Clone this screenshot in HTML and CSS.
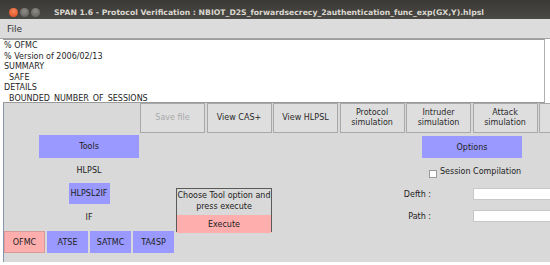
FILE: index.html
```html
<!DOCTYPE html>
<html lang="en">
<head>
  <meta charset="UTF-8">
  <meta name="viewport" content="width=device-width, initial-scale=1.0">
  <title>SPAN 1.6 - Protocol Verification</title>
  <link rel="stylesheet" href="styles.css">
</head>
<body>
  <div class="titlebar">
    <span class="dot close"></span>
    <span class="dot"></span>
    <span class="dot"></span>
    <span class="title">SPAN 1.6 - Protocol Verification : NBIOT_D2S_forwardsecrecy_2authentication_func_exp(GX,Y).hlpsl</span>
  </div>
  <div class="menubar"><span>File</span></div>

  <div class="content">
    <pre class="output">% OFMC
% Version of 2006/02/13
SUMMARY
  SAFE
DETAILS
  BOUNDED_NUMBER_OF_SESSIONS</pre>

    <div class="panel">
      <div class="actions">
        <button class="btn disabled">Save file</button>
        <button class="btn">View CAS+</button>
        <button class="btn">View HLPSL</button>
        <button class="btn">Protocol<br>simulation</button>
        <button class="btn">Intruder<br>simulation</button>
        <button class="btn">Attack<br>simulation</button>
        <button class="btn"></button>
      </div>

      <div class="workspace">
        <div class="tools-col">
          <button class="blue tools-btn">Tools</button>
          <div class="step">HLPSL</div>
          <button class="blue small-btn">HLPSL2IF</button>
          <div class="step step-if">IF</div>
          <div class="backends">
            <button class="pink small-btn">OFMC</button>
            <button class="blue small-btn">ATSE</button>
            <button class="blue small-btn">SATMC</button>
            <button class="blue small-btn">TA4SP</button>
          </div>
        </div>

        <div class="execute-box">
          <p>Choose Tool option and<br>press execute</p>
          <button class="pink execute-btn">Execute</button>
        </div>

        <div class="options-col">
          <button class="blue options-btn">Options</button>
          <label class="session"><span class="check"></span>Session Compilation</label>
          <div class="fields">
            <label for="depth">Defth :</label>
            <input type="text" id="depth">
            <label for="path">Path :</label>
            <input type="text" id="path">
          </div>
        </div>
      </div>
    </div>
  </div>
</body>
</html>
```

FILE: styles.css
```css
body {
  margin: 0;
  width: 550px;
  height: 265px;
  overflow: hidden;
  background: #ffffff;
  font-family: "DejaVu Sans", sans-serif;
  font-size: 8px;
  color: #222;
}
button {
  font-family: "DejaVu Sans", sans-serif;
  font-size: 8px;
  color: #222;
  padding: 0;
  cursor: pointer;
}
.titlebar {
  height: 19px;
  padding-top: 5px;
  box-sizing: border-box;
  display: flex;
  align-items: center;
  background: linear-gradient(#3a3935, #4a4945);
}
.dot {
  width: 9px;
  height: 9px;
  border-radius: 50%;
  margin-left: 2px;
  background: radial-gradient(circle at 50% 35%, #8d8c87, #5c5b57);
}
.dot.close {
  margin-left: 9px;
  background: radial-gradient(circle at 50% 35%, #f7875a, #d9481d);
}
.title {
  margin-left: 14px;
  color: #dcd8cf;
  font-weight: bold;
  font-size: 7.7px;
  white-space: nowrap;
}
.menubar {
  height: 19px;
  display: flex;
  align-items: center;
  padding-left: 7px;
  background: #dcdcdc;
  border-bottom: 1px solid #a4a4a4;
  font-size: 9px;
  color: #333;
}
.content {
  margin-left: 3px;
}
.output {
  margin: 0;
  width: 540px;
  height: 61px;
  padding-top: 1px;
  overflow: hidden;
  background: #ffffff;
  border-top: 1px solid #9a9a9a;
  border-bottom: 1px solid #9a9a9a;
  border-right: 1px solid #b0b0b0;
  padding-left: 1px;
  font-family: "DejaVu Sans", sans-serif;
  font-size: 8px;
  line-height: 10.6px;
  color: #1e1e1e;
}
.panel {
  height: 159px;
  background: #d9d9d9;
  border-left: 1px solid #8797b0;
  overflow: hidden;
}
.actions {
  display: flex;
  gap: 1.5px;
  padding-left: 136px;
  height: 30px;
}
.btn {
  flex: none;
  width: 65px;
  height: 30px;
  background: #dedede;
  border: 1px solid #a8a8a8;
  line-height: 10px;
  color: #2a2a2a;
}
.btn.disabled {
  color: #a9a9a9;
}
.workspace {
  display: flex;
}
.tools-col {
  width: 173px;
  display: flex;
  flex-direction: column;
  align-items: center;
  padding-top: 2px;
}
.blue {
  background: #9999ff;
  border: none;
}
.pink {
  background: #ffaeae;
  border: 1px solid #d99a9a;
}
.tools-btn {
  width: 100px;
  height: 23px;
}
.step {
  height: 25px;
  display: flex;
  align-items: center;
}
.step-if {
  height: 27px;
}
.small-btn {
  width: 41px;
  height: 21px;
}
.backends {
  display: flex;
  gap: 2px;
}
.backends .small-btn {
  height: 22px;
}
.execute-box {
  width: 94px;
  height: 42px;
  margin: 55px 0 0 2px;
  border: 1px solid #5a5a5a;
  text-align: center;
}
.execute-box p {
  margin: 1px 0 3px;
  line-height: 11px;
}
.execute-btn {
  width: 94px;
  height: 18px;
  border: none;
}
.options-col {
  flex: 1;
  padding-top: 3px;
}
.options-btn {
  margin-left: 150px;
  width: 100px;
  height: 22px;
}
.session {
  margin-left: 157px;
  height: 26px;
  display: flex;
  align-items: center;
}
.check {
  width: 6px;
  height: 6px;
  margin: 5px 3px 0 0;
  background: #ffffff;
  border: 1px solid #9a9a9a;
}
.fields {
  display: grid;
  grid-template-columns: 159px 90px;
  column-gap: 42px;
  row-gap: 10px;
  margin-top: 4px;
  align-items: center;
}
.fields label {
  text-align: right;
}
.fields input {
  height: 12px;
  box-sizing: border-box;
  border: 1px solid #c8c8c8;
  background: #ffffff;
  padding: 0;
}
```
